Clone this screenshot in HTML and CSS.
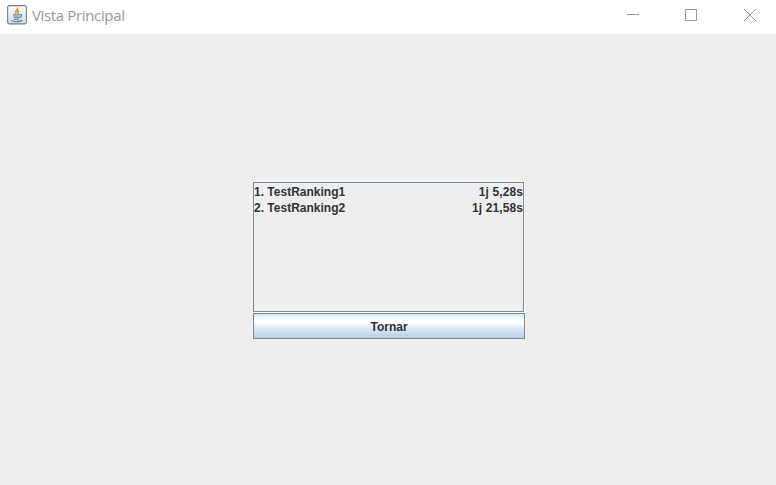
FILE: index.html
```html
<!DOCTYPE html>
<html lang="ca">
<head>
<meta charset="utf-8">
<title>Vista Principal</title>
<link rel="stylesheet" href="styles.css">
</head>
<body>
<header class="titlebar">
  <svg class="app-icon" width="20" height="20" viewBox="0 0 20 20">
    <defs><linearGradient id="tile" x1="0" y1="0" x2="0" y2="1"><stop offset="0" stop-color="#fff"/><stop offset="1" stop-color="#d5d9dc"/></linearGradient></defs>
    <rect x=".6" y=".6" width="18.8" height="18.3" rx="1.8" fill="url(#tile)" stroke="#71838f" stroke-width="1.1"/>
    <path d="M10.5 2.5c1.4 2.3-3.7 3.4-1.3 6.2M12.1 5.2c-2.2 1.1-1.2 2-.8 3.8" fill="none" stroke="#e99140" stroke-width="1.6"/>
    <path d="M6 9.8h7M6.5 12h6M7 14h5M13 9.5c2.6-.3 2 2.2-.4 3M4.3 15.5c2.6 1.5 8.3 1.4 11-.1" fill="none" stroke="#5b87a6" stroke-width="1.25"/>
  </svg>
  <h1 class="title">Vista Principal</h1>
  <div class="controls">
    <svg width="58" height="34" viewBox="0 0 58 34"><path d="M17 14.5h12"/></svg>
    <svg width="58" height="34" viewBox="0 0 58 34"><path d="M17.5 9.5h11v11h-11z"/></svg>
    <svg width="50" height="34" viewBox="0 0 50 34"><path d="M18 9l12 12M30 9l-12 12"/></svg>
  </div>
</header>
<main class="content">
  <ol class="ranking">
    <li class="row"><span>1. TestRanking1</span><span class="time">1j 5,28s</span></li>
    <li class="row"><span>2. TestRanking2</span><span class="time">1j 21,58s</span></li>
  </ol>
  <button class="back" type="button">Tornar</button>
</main>
</body>
</html>
```
FILE: styles.css
```css
* { box-sizing: border-box; }
body {
  margin: 0;
  height: 485px;
  overflow: hidden;
  background: #eee;
  color: #333;
  font: bold 12px/16px "Liberation Sans", Arial, sans-serif;
}
.titlebar {
  display: flex;
  height: 34px;
  padding-left: 7px;
  background: #fff;
}
.app-icon { margin-top: 5px; }
.title {
  margin: 0 0 0 5px;
  font: 400 15px/30px "Open Sans", "Noto Sans", sans-serif;
  letter-spacing: -0.35px;
  color: #999;
}
.controls {
  display: flex;
  margin-left: auto;
  fill: none;
  stroke: #999;
}
.controls svg { display: block; }
.content {
  width: 272px;
  margin: 148px 0 0 253px;
}
.ranking {
  list-style: none;
  width: 271px;
  height: 130px;
  margin: 0 0 1px;
  padding: 1px 0 0;
  border: 1px solid #7a8a99;
  box-shadow: 1px 1px 0 #fff;
}
.row {
  display: flex;
  justify-content: space-between;
  white-space: nowrap;
}
.time {
  letter-spacing: 0.1px;
}
.back {
  display: block;
  width: 272px;
  height: 26px;
  padding: 2px 0 0;
  border: 1px solid #7a8a99;
  border-radius: 0;
  background: linear-gradient(#dde8f3 0%, #fff 30%, #fff 36%, #dde8f3 60%, #b8cfe5 100%);
  color: #333;
  font: inherit;
}
```
